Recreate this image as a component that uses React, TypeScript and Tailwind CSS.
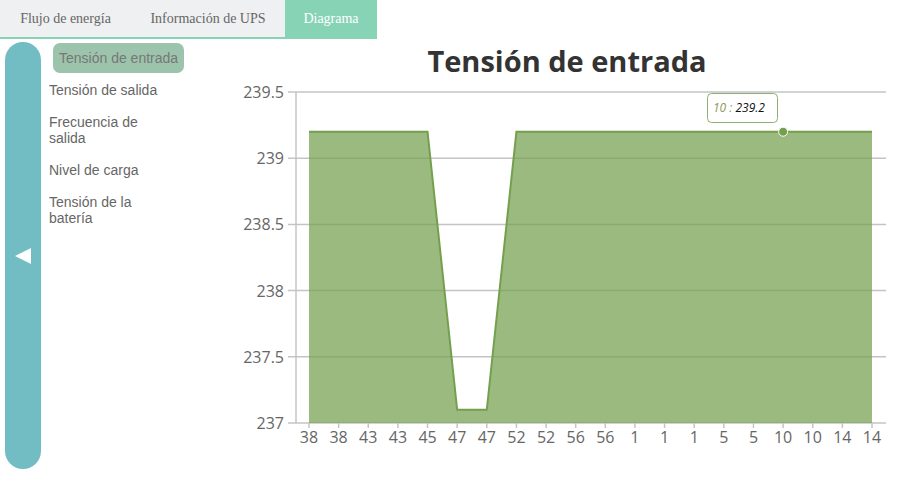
import React from "react";

const labels = ["38", "38", "43", "43", "45", "47", "47", "52", "52", "56", "56", "1", "1", "1", "5", "5", "10", "10", "14", "14"];
const values = [239.2, 239.2, 239.2, 239.2, 239.2, 237.1, 237.1, 239.2, 239.2, 239.2, 239.2, 239.2, 239.2, 239.2, 239.2, 239.2, 239.2, 239.2, 239.2, 239.2];
const ticks = [239.5, 239, 238.5, 238, 237.5, 237];

const X0 = 89;
const STEP = 29.632;
const TOP = 12;
const BOTTOM = 343;
const yOf = (v: number) => TOP + ((239.5 - v) / 2.5) * (BOTTOM - TOP);
const xOf = (i: number) => X0 + i * STEP;

function Chart() {
  const line = values.map((v, i) => `${i === 0 ? "M" : "L"}${xOf(i)},${yOf(v)}`).join(" ");
  const area = `${line} L${xOf(values.length - 1)},${BOTTOM} L${X0},${BOTTOM} Z`;
  return (
    <svg width="690" height="380" className="block" style={{ fontFamily: "'Open Sans', sans-serif" }}>
      {ticks.map((t) => (
        <g key={t}>
          <line x1={68} x2={666} y1={yOf(t)} y2={yOf(t)} stroke="#c4c4c4" strokeWidth={1.5} />
          <text x={64} y={yOf(t) + 6} textAnchor="end" fontSize={16} fill="#666">
            {t}
          </text>
        </g>
      ))}
      <line x1={76} x2={76} y1={TOP} y2={BOTTOM} stroke="#c4c4c4" strokeWidth={1.5} />
      <path d={area} fill="#74a04e" fillOpacity={0.72} />
      <path d={line} fill="none" stroke="#74a04e" strokeWidth={2} />
      {labels.map((l, i) => (
        <g key={i}>
          <line x1={xOf(i)} x2={xOf(i)} y1={BOTTOM} y2={BOTTOM + 5} stroke="#c4c4c4" strokeWidth={1.5} />
          <text x={xOf(i)} y={BOTTOM + 20} textAnchor="middle" fontSize={16} fill="#666">
            {l}
          </text>
        </g>
      ))}
      <circle cx={xOf(16)} cy={yOf(239.2)} r={4.5} fill="#74a04e" stroke="#fff" strokeWidth={1} />
      <rect x={487.5} y={13.5} width={70} height={29} rx={4} fill="#fff" stroke="#8bb073" strokeWidth={1} />
      <text x={493} y={32} fontSize={12} fontStyle="italic">
        <tspan fill="#8a9a5b">10 : </tspan>
        <tspan fill="#111">239.2</tspan>
      </text>
    </svg>
  );
}

const menu = ["Tensión de salida", "Frecuencia de salida", "Nivel de carga", "Tensión de la batería"];

export default function App() {
  return (
    <div className="h-[499px] w-[910px] overflow-hidden bg-white">
      <div className="flex h-[39px] w-[377px] border-b-2 border-[#86d3b6] text-[14px] text-[#666]" style={{ fontFamily: "'Liberation Serif', serif" }}>
        <div className="flex flex-1 items-center justify-center bg-[#eef0f1] pb-[1px]">Flujo de energía</div>
        <div className="flex w-[154px] items-center justify-center bg-[#eef0f1] pb-[1px]">Información de UPS</div>
        <div className="flex w-[92px] items-center justify-center bg-[#86d3b6] pb-[1px] text-white">Diagrama</div>
      </div>
      <div className="mt-[3px] flex">
        <div className="ml-[5px] flex h-[427px] w-[36px] items-center justify-center rounded-[18px] bg-[#72bcc4] text-white">
          <svg width="16" height="16" viewBox="0 0 16 16">
            <path d="M0 8 L16 0 L16 16 Z" fill="#fff" />
          </svg>
        </div>
        <div className="w-[179px] text-[14px] leading-[16px] text-[#666]" style={{ fontFamily: "'Liberation Sans', Arial, sans-serif" }}>
          <div className="ml-[12px] mt-[1px] inline-block rounded-[7px] bg-[#9cc4ac] px-[6px] py-[7px] text-[#777]">Tensión de entrada</div>
          <div className="ml-[8px] mt-[9px] flex w-[110px] flex-col gap-[16px]">
            {menu.map((m) => (
              <div key={m}>{m}</div>
            ))}
          </div>
        </div>
        <div className="flex flex-col">
          <div className="flex h-[38px] items-center justify-center pl-[4px] text-[29px] font-bold text-[#333]" style={{ fontFamily: "'Open Sans', sans-serif" }}>
            Tensión de entrada
          </div>
          <Chart />
        </div>
      </div>
    </div>
  );
}
